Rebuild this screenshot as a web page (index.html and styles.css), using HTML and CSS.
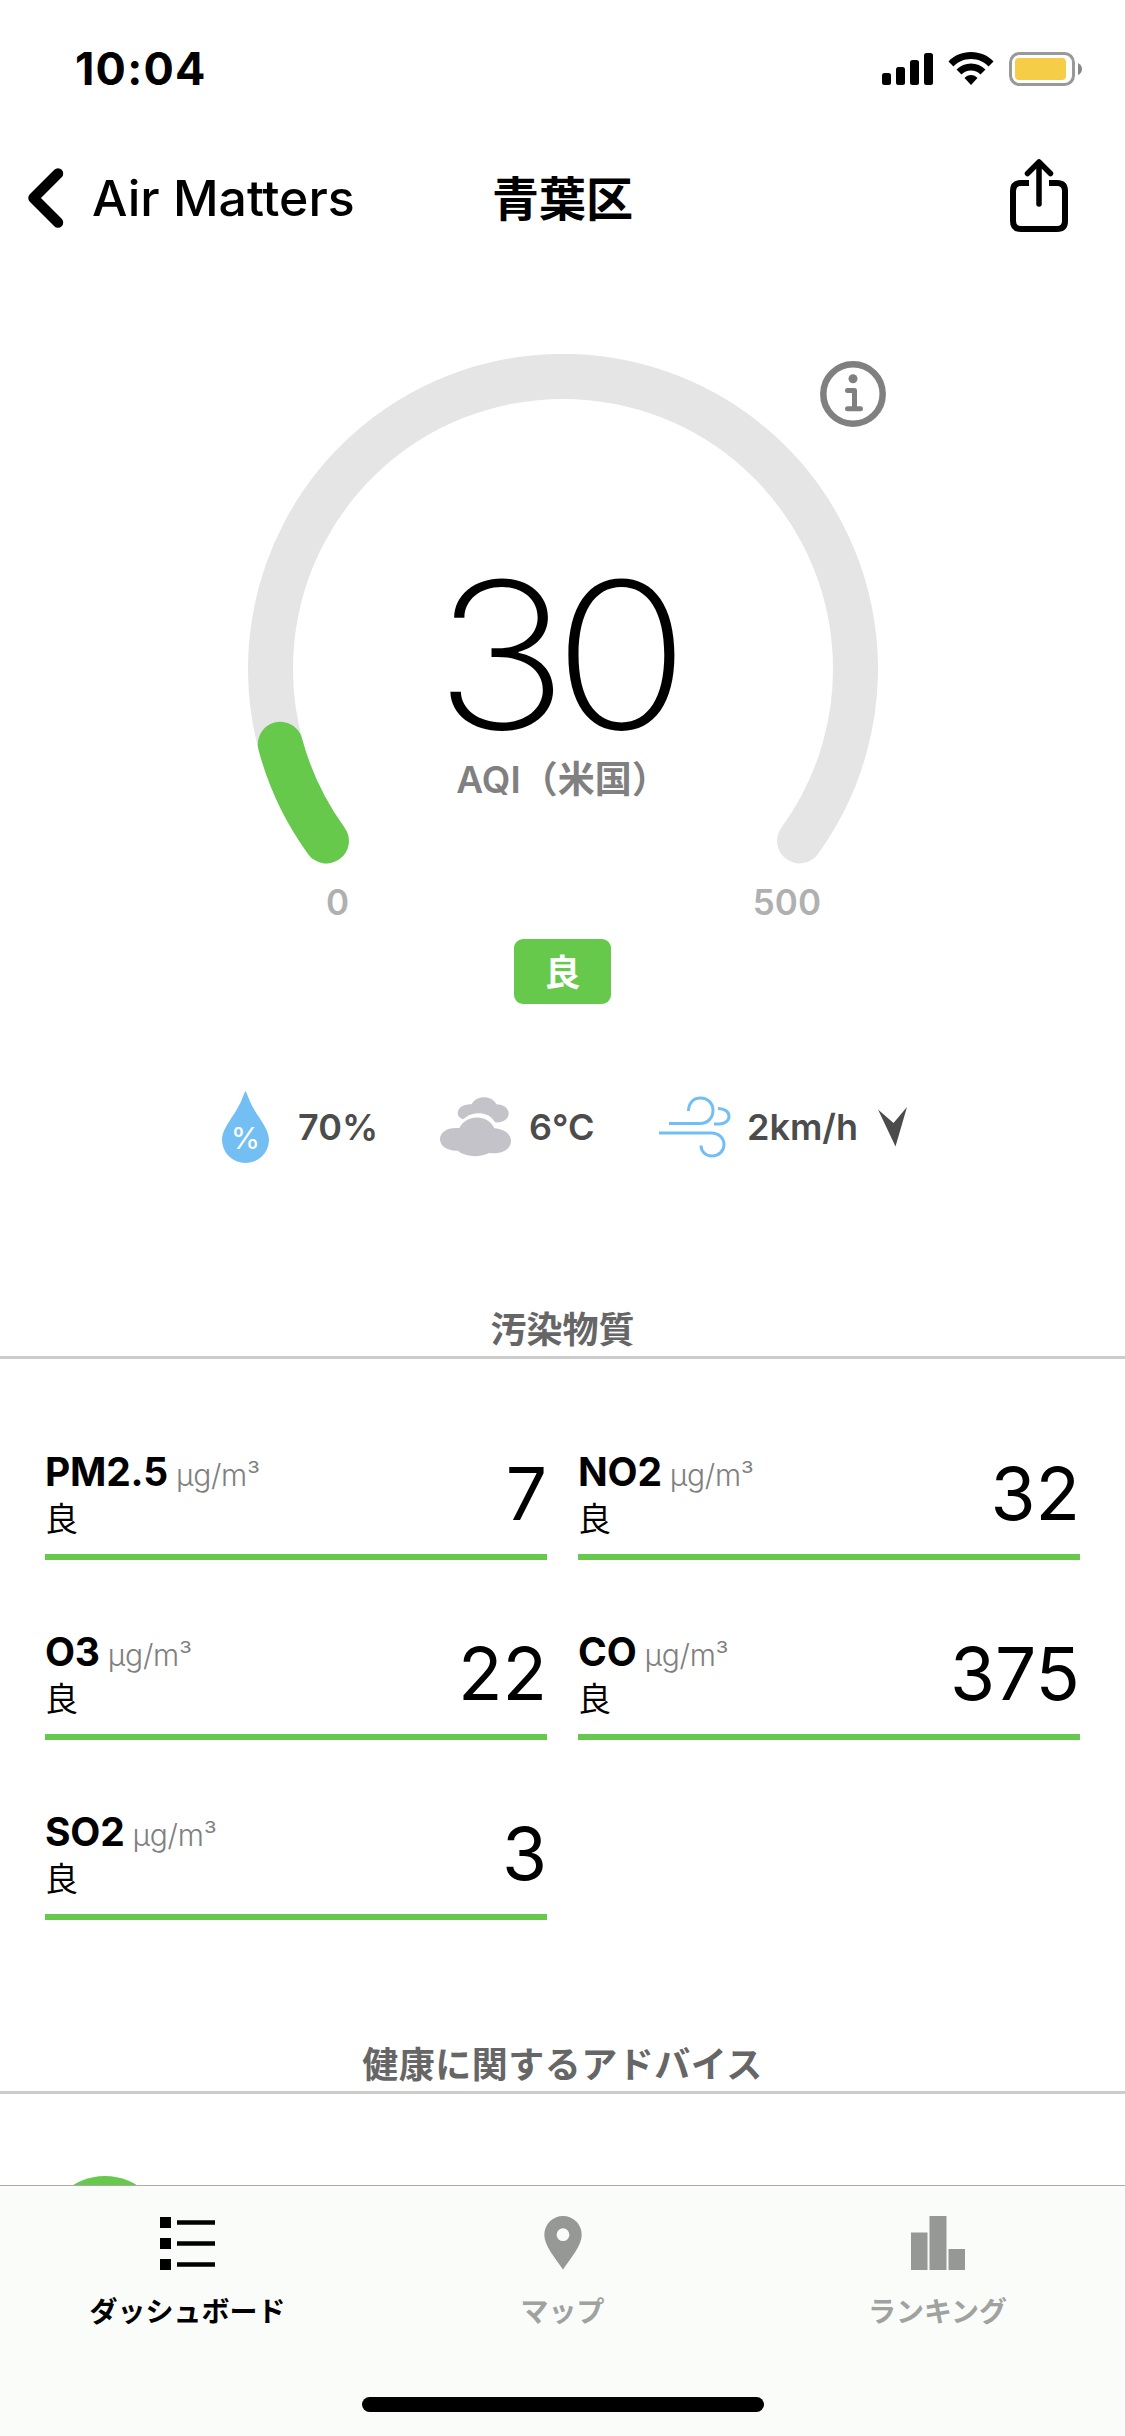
FILE: index.html
```html
<!DOCTYPE html>
<html lang="ja">
<head>
<meta charset="utf-8">
<title>Air Matters</title>
<link rel="stylesheet" href="styles.css">
</head>
<body>
<div class="screen">
  <header class="status-bar">
    <span class="clock">10:04</span>
    <div class="status-icons">
      <svg class="signal" width="52" height="34" viewBox="0 0 52 34"><rect x="0" y="21" width="9" height="12" rx="2.5"/><rect x="14" y="15" width="9" height="18" rx="2.5"/><rect x="28" y="8" width="9" height="25" rx="2.5"/><rect x="42" y="1" width="9" height="32" rx="2.5"/></svg>
      <svg class="wifi" width="46" height="34" viewBox="0 0 46 34"><path d="M23 0C32 0 40 3.500 45.500 9.500L40.500 14.500C36 9.700 30 7 23 7S10 9.700 5.500 14.500L.5 9.500C6 3.500 14 0 23 0Z"/><path d="M23 11.500C28.500 11.500 33.500 13.700 37.500 17.500L32.500 22.500C30 20 26.700 18.500 23 18.500S16 20 13.500 22.500L8.500 17.500C12.500 13.700 17.500 11.500 23 11.500Z"/><path d="M23 23C25.500 23 27.800 24 29.500 26L23 33L16.500 26C18.200 24 20.500 23 23 23Z"/></svg>
      <svg class="battery" width="74" height="34" viewBox="0 0 74 34"><rect x="1.500" y="1.500" width="63" height="31" rx="9" fill="none" stroke="#999" stroke-width="3"/><rect x="6" y="6" width="51" height="22" rx="4" fill="#f6cd46"/><path d="M69 11Q73 13 73 17T69 23Z" fill="#888"/></svg>
    </div>
  </header>

  <nav class="nav-bar">
    <a class="back"><svg width="38" height="62" viewBox="0 0 38 62"><path d="M32 6.500L7.500 31L32 55.500" fill="none" stroke="#000" stroke-width="10.500" stroke-linecap="round" stroke-linejoin="round"/></svg><span>Air Matters</span></a>
    <h1 class="title">青葉区</h1>
    <svg class="share" width="58" height="76" viewBox="0 0 58 76" fill="none" stroke="#000" stroke-width="6"><path d="M19 25H11Q3 25 3 33V63Q3 71 11 71H47Q55 71 55 63V33Q55 25 47 25H39"/><path d="M29 46V5M17.500 15.500L29 4L40.500 15.500" stroke-width="5.500" stroke-linecap="round" stroke-linejoin="round"/></svg>
  </nav>

  <section class="gauge">
    <svg class="dial" width="630" height="540" viewBox="0 0 630 540" fill="none" stroke-width="45" stroke-linecap="round"><path d="M78.400 486.900A292.500 292.500 0 1 1 551.600 486.900" stroke="#e5e5e5"/><path d="M78.400 486.900A292.500 292.500 0 0 1 32.300 390.200" stroke="#66c94b"/></svg>
    <svg class="info" width="66" height="66" viewBox="0 0 66 66" fill="none" stroke="#808080"><circle cx="33" cy="33" r="29.700" stroke-width="6.500"/><circle cx="33" cy="17.800" r="4.500" fill="#808080" stroke="none"/><path d="M27.500 29.500H34.500V47.500M27.500 47.700H40.500" stroke-width="5" stroke-linecap="round" stroke-linejoin="round"/></svg>
    <div class="reading"><strong class="aqi">30</strong><span class="scale-name">AQI（米国）</span></div>
    <div class="limits"><span>0</span><span>500</span></div>
    <span class="badge">良</span>
  </section>

  <section class="weather">
    <div class="metric humidity"><span class="drop"><svg width="47" height="72" viewBox="0 0 47 72"><path d="M23.500 0C25 3 26 5 27 8C33 24 47 36 47 49A23.500 23 0 0 1 0 49C0 36 14 24 20 8C21 5 22 3 23.500 0Z" fill="#73bff4"/></svg><span class="percent">%</span></span><span>70%</span></div>
    <div class="metric temp"><svg width="72" height="60" viewBox="0 0 72 60" fill="#c3c3c9"><path d="M31.700 7.300C36 -2 52 -2 56.300 7.300C64 7.500 68.700 11.500 68.700 16.500C68.700 22 63 26 55 25.300C51 18.500 45 16 37 16.300Q28.500 17 23.300 22.300C19.500 21 17.700 19 17.700 16.500C17.700 11 23 7 31.700 7.300Z"/><path d="M19.300 31.300C26 17 48 17 54.300 31.300C65 32 71 37.500 71 44C71 52.500 61 57.500 49.300 56C40 60.500 26 60.500 17.700 53.700C7 54 0 49 0 42.300C0 35 8 30 19.300 31.300Z"/></svg><span>6°C</span></div>
    <div class="metric wind"><svg width="72" height="64" viewBox="0 0 72 64" fill="none" stroke="#73bff4" stroke-width="3"><path d="M10 28.500H41C49 28.500 54 22.500 54 15.500C54 8 48.500 3 41.500 3C34 3 29.500 8.500 29.500 16"/><path d="M55 29H60C66 29 70 25.500 70 21.500C70 17 66 13.500 59 13.500"/><path d="M0 38H52C60 38 65 43 65 49.500C65 56 60 61 53 61C46.500 61 42 56.500 42 50.500"/></svg><span>2km/h</span><svg class="heading" width="30" height="40" viewBox="0 0 30 40"><path d="M0 2.500L15.500 16L29 0L17.500 39.500Z" fill="#4c4c4c"/></svg></div>
  </section>

  <h2 class="section-title">汚染物質</h2>
  <section class="pollutants">
    <div class="cell"><div><p class="name">PM2.5<small>µg/m³</small></p><p class="level">良</p></div><b>7</b></div>
    <div class="cell"><div><p class="name">NO2<small>µg/m³</small></p><p class="level">良</p></div><b>32</b></div>
    <div class="cell"><div><p class="name">O3<small>µg/m³</small></p><p class="level">良</p></div><b>22</b></div>
    <div class="cell"><div><p class="name">CO<small>µg/m³</small></p><p class="level">良</p></div><b>375</b></div>
    <div class="cell"><div><p class="name">SO2<small>µg/m³</small></p><p class="level">良</p></div><b>3</b></div>
  </section>
  <h2 class="section-title advice">健康に関するアドバイス</h2>
  <section class="advice-list"><i class="advice-icon"></i></section>

  <footer class="tab-bar">
    <div class="tabs">
      <a class="tab active"><svg width="56" height="54" viewBox="0 0 56 54"><path d="M0 1H11V12H0ZM0 22H11V33H0ZM0 43H11V54H0ZM17 4.300H55V8.700H17ZM17 25.300H55V29.700H17ZM17 46.300H55V50.700H17Z"/></svg><span>ダッシュボード</span></a>
      <a class="tab"><svg width="38" height="54" viewBox="0 0 38 54"><path fill-rule="evenodd" d="M19 0A18.700 18.700 0 0 1 37.700 19C37.700 30 26 43 19 53.500C12 43 .3 30 .3 19A18.700 18.700 0 0 1 19 0ZM19 12.300A6.400 6.400 0 1 0 19 25.100A6.400 6.400 0 1 0 19 12.300Z"/></svg><span>マップ</span></a>
      <a class="tab"><svg width="54" height="54" viewBox="0 0 54 54"><path d="M0 16.500H16.500V54H0ZM18.500 0H35.500V54H18.500ZM37.500 33H54V54H37.500Z"/></svg><span>ランキング</span></a>
    </div>
    <div class="home-indicator"></div>
  </footer>
</div>
</body>
</html>
```
FILE: styles.css
```css
* { box-sizing: border-box; margin: 0; padding: 0; }
body { background: #fff; color: #000; font-family: Inter, "Noto Sans CJK JP", sans-serif; }
svg { display: block; flex: none; }
.screen { width: 1125px; height: 2436px; overflow: hidden; display: flex; flex-direction: column; }

.status-bar { height: 138px; flex: none; display: flex; justify-content: space-between; align-items: center; padding: 0 42px 0 75px; }
.clock { font-size: 45px; font-weight: 700; line-height: 54px; letter-spacing: 1.2px; }
.status-icons { display: flex; }
.wifi { margin: 0 15px 0 14px; }

.nav-bar { height: 132px; flex: none; display: grid; grid-template-columns: 1fr auto 1fr; padding: 18px 26px 0; align-items: start; }
.back { display: flex; align-items: center; gap: 28px; height: 84px; font-size: 50px; font-weight: 500; white-space: nowrap; }
.title { height: 84px; line-height: 86px; font-size: 47px; font-weight: 700; }
.share { justify-self: end; margin: 2px 31px 0 0; }

.gauge { position: relative; height: 780px; flex: none; display: flex; flex-direction: column; align-items: center; padding-top: 84px; }
.dial { flex: none; }
.info { position: absolute; left: 820px; top: 91px; }
.reading { position: absolute; top: 285px; left: 0; width: 1125px; display: flex; flex-direction: column; align-items: center; }
.aqi { font-size: 204px; line-height: 200px; font-weight: 200; letter-spacing: -14px; margin-right: 16px; transform: scaleX(1.11); }
.scale-name { font-size: 37px; line-height: 49px; font-weight: 600; color: #808080; }
.limits { width: 495px; display: flex; justify-content: space-between; margin: -14px 0 0 22px; font-size: 35px; line-height: 44px; font-weight: 600; color: #b0b0b0; }
.badge { width: 97px; height: 65px; margin-top: 15px; border-radius: 9px; background: #66c94b; color: #fff; font-size: 36px; line-height: 68px; font-weight: 600; text-align: center; }

.weather { height: 152px; flex: none; display: flex; align-items: center; padding: 1px 0 0 222px; color: #4c4c4c; font-size: 36px; font-weight: 600; }
.metric { display: flex; align-items: center; }
.humidity { gap: 29px; width: 218px; }
.temp { gap: 17px; width: 219px; }
.wind { gap: 16px; }
.heading { margin-left: 4px; }
.drop { position: relative; }
.percent { position: absolute; left: 0; top: 29px; width: 47px; text-align: center; color: #fff; font-size: 30px; line-height: 36px; font-weight: 400; }

.section-title { height: 157px; flex: none; padding-top: 102px; border-bottom: 3px solid #ccc; text-align: center; font-size: 36px; line-height: 52px; font-weight: 600; color: #666; }
.advice { letter-spacing: 0.5px; }
.pollutants { flex: none; display: grid; grid-template-columns: 502px 502px; grid-auto-rows: 180px; column-gap: 31px; padding: 21px 45px 0; height: 578px; }
.cell { height: 180px; border-bottom: 6px solid #66c94b; display: flex; justify-content: space-between; align-items: flex-end; }
.name { font-size: 39px; line-height: 46px; font-weight: 650; letter-spacing: -0.2px; white-space: nowrap; }
.name small { margin-left: 8px; font-size: 30px; font-weight: 300; letter-spacing: -0.3px; color: #808080; }
.level { font-size: 33px; line-height: 42px; margin-bottom: 14px; }
.cell b { font-size: 73px; line-height: 80px; font-weight: 400; margin-bottom: 20px; }
.advice-list { height: 91px; flex: none; overflow: hidden; padding: 82px 0 0 45px; }
.advice-icon { display: block; width: 120px; height: 120px; border-radius: 50%; background: #66c94b; }

.tab-bar { flex: none; height: 251px; border-top: 1px solid #a9aba9; background: #fafcfa; display: flex; flex-direction: column; align-items: center; justify-content: space-between; padding: 30px 0 24px; }
.tabs { width: 1125px; display: grid; grid-template-columns: repeat(3, 1fr); }
.tab { display: flex; flex-direction: column; align-items: center; gap: 21px; font-size: 28px; line-height: 42px; font-weight: 600; color: #a0a2a0; }
.tab svg { fill: #969895; }
.tab.active { color: #000; }
.tab.active svg { fill: #000; }
.home-indicator { width: 402px; height: 15px; border-radius: 8px; background: #000; }
```
